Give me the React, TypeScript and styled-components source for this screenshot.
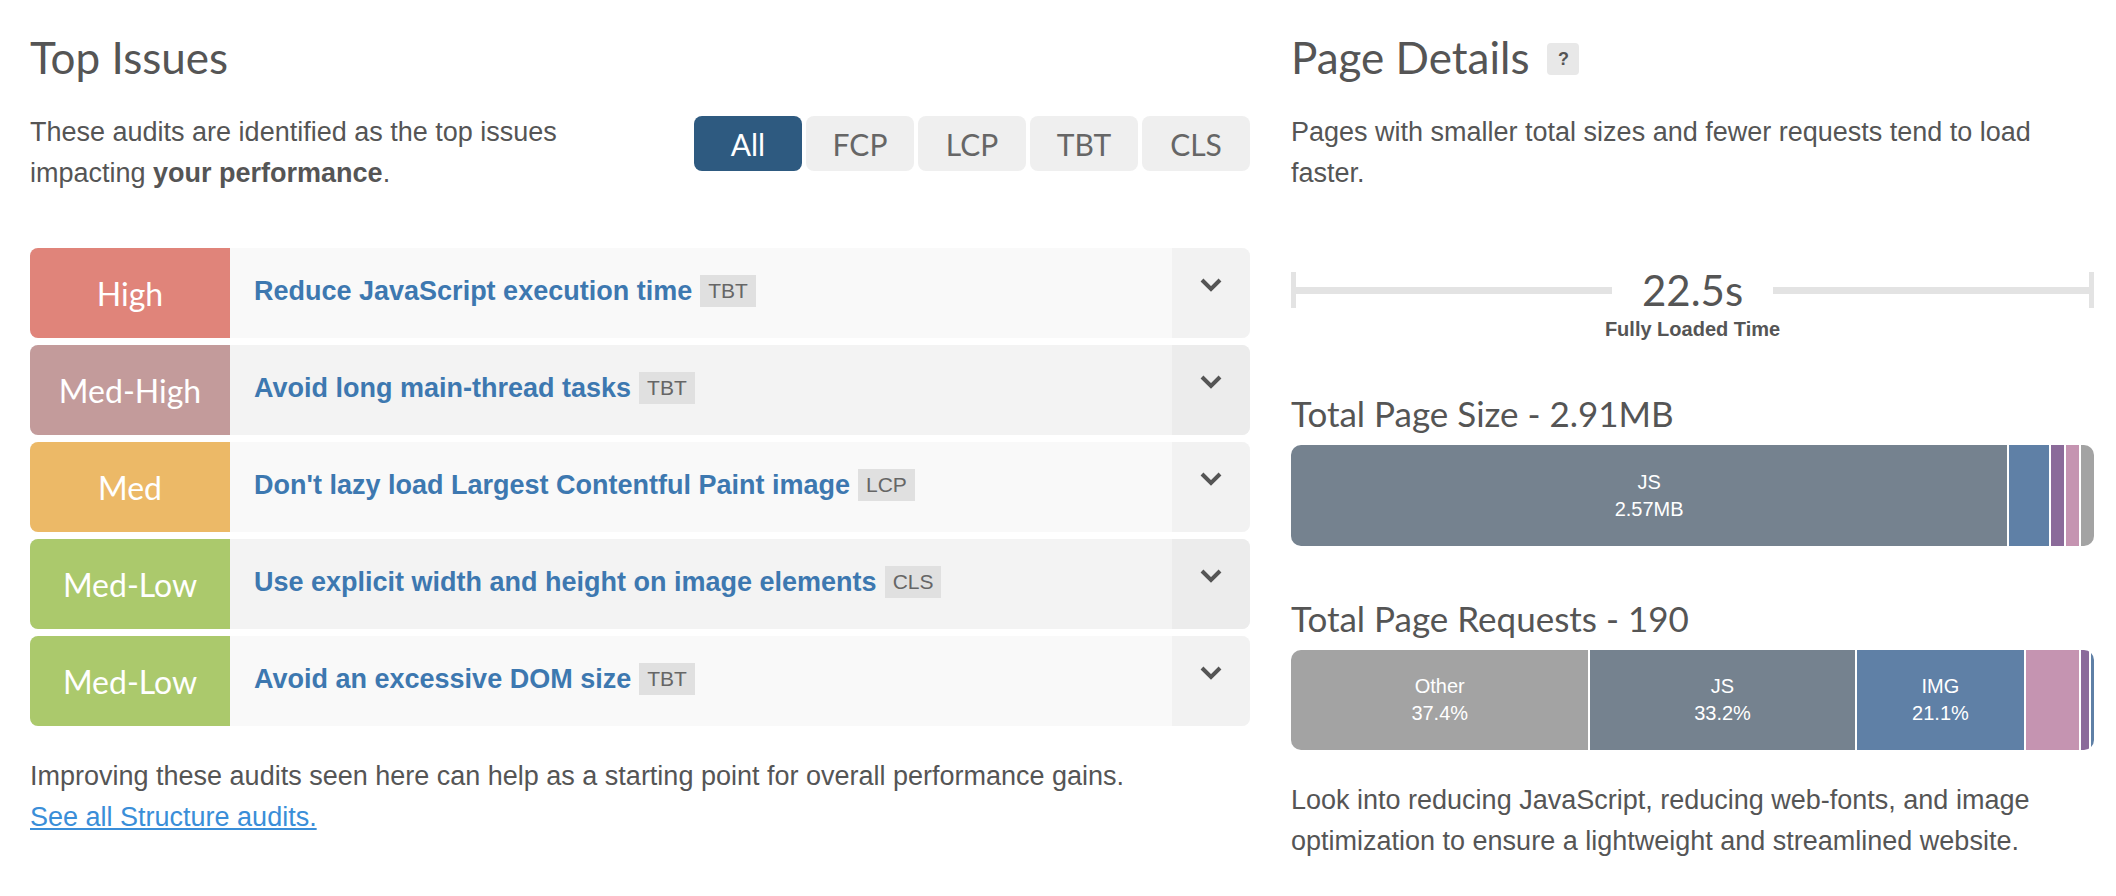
import styled, { createGlobalStyle } from 'styled-components'

const GlobalStyle = createGlobalStyle`
  body {
    margin: 0;
    background: #fff;
    font-family: "Liberation Sans", Arial, sans-serif;
    color: #555;
  }
`

const levelColors: Record<string, string> = {
  High: '#e0847a',
  'Med-High': '#c39b9b',
  Med: '#ecb967',
  'Med-Low': '#abc96c',
}

const issues = [
  { level: 'High', title: 'Reduce JavaScript execution time', tag: 'TBT' },
  { level: 'Med-High', title: 'Avoid long main-thread tasks', tag: 'TBT' },
  { level: 'Med', title: "Don't lazy load Largest Contentful Paint image", tag: 'LCP' },
  { level: 'Med-Low', title: 'Use explicit width and height on image elements', tag: 'CLS' },
  { level: 'Med-Low', title: 'Avoid an excessive DOM size', tag: 'TBT' },
]

const filters = ['All', 'FCP', 'LCP', 'TBT', 'CLS']

const sizeSegments = [
  { pct: 89.2, color: '#75828f', label: 'JS', value: '2.57MB' },
  { pct: 5.0, color: '#5f80a6' },
  { pct: 1.6, color: '#8b6b9a' },
  { pct: 1.6, color: '#c594b1' },
  { pct: 1.6, color: '#a3a3a3' },
]

const requestSegments = [
  { pct: 37.4, color: '#a3a3a3', label: 'Other', value: '37.4%' },
  { pct: 33.2, color: '#75828f', label: 'JS', value: '33.2%' },
  { pct: 21.1, color: '#5f80a6', label: 'IMG', value: '21.1%' },
  { pct: 6.6, color: '#c594b1' },
  { pct: 1.0, color: '#8b6b9a' },
  { pct: 0.4, color: '#5f80a6' },
]

const Page = styled.div`
  display: grid;
  grid-template-columns: 1220px 803px;
  column-gap: 41px;
  padding: 28px 0 0 30px;
`

const Column = styled.div`
  display: flex;
  flex-direction: column;
`

const Heading = styled.h2`
  margin: 0;
  font-family: Lato, "Open Sans", sans-serif;
  font-weight: 400;
  font-size: 44px;
  line-height: 58px;
  color: #555;
  display: flex;
  align-items: center;
  gap: 18px;
`

const HelpBox = styled.span`
  width: 32px;
  height: 32px;
  border-radius: 4px;
  background: #e8e8e8;
  font-family: "Liberation Sans", Arial, sans-serif;
  font-weight: 700;
  font-size: 18px;
  display: flex;
  align-items: center;
  justify-content: center;
  margin-top: 4px;
`

const Intro = styled.div`
  display: flex;
  justify-content: space-between;
  align-items: flex-start;
  margin-top: 26px;
`

const Text = styled.p`
  margin: 0;
  font-size: 27px;
  line-height: 41px;
  color: #555;
`

const Filters = styled.div`
  display: flex;
  gap: 4px;
  margin-top: 4px;
`

const FilterButton = styled.button<{ $active?: boolean }>`
  width: 108px;
  height: 55px;
  border: none;
  border-radius: 8px;
  font-family: Lato, "Open Sans", sans-serif;
  font-size: 30px;
  color: ${({ $active }) => ($active ? '#fff' : '#666')};
  background: ${({ $active }) => ($active ? '#2e5a80' : '#efefef')};
`

const IssueList = styled.div`
  display: flex;
  flex-direction: column;
  gap: 7px;
  margin-top: 54px;
`

const IssueRow = styled.div<{ $alt: boolean }>`
  display: flex;
  height: 90px;
  border-radius: 8px;
  overflow: hidden;
  background: ${({ $alt }) => ($alt ? '#f3f3f3' : '#f9f9f9')};
`

const Level = styled.div<{ $color: string }>`
  width: 200px;
  flex-shrink: 0;
  background: ${({ $color }) => $color};
  color: #fff;
  font-family: Lato, "Open Sans", sans-serif;
  font-size: 32px;
  display: flex;
  align-items: center;
  justify-content: center;
`

const IssueTitle = styled.div`
  flex: 1;
  display: flex;
  align-items: center;
  gap: 8px;
  padding-left: 24px;
  padding-bottom: 4px;
  font-size: 27px;
  font-weight: 700;
  color: #3d78b0;
`

const Tag = styled.span`
  background: #e0e0e0;
  color: #666;
  font-weight: 400;
  font-size: 21px;
  padding: 4px 8px;
`

const Chevron = styled.div<{ $alt: boolean }>`
  width: 78px;
  display: flex;
  justify-content: center;
  padding-top: 30px;
  box-sizing: border-box;
  background: ${({ $alt }) => ($alt ? '#ececec' : '#f2f2f2')};
`

const Footer = styled.div`
  margin-top: 30px;
`

const Link = styled.a`
  font-size: 27px;
  line-height: 41px;
  color: #3a8ed8;
  text-decoration: underline;
`

const Timeline = styled.div`
  margin-top: 78px;
  display: flex;
  align-items: center;
  height: 36px;
`

const Cap = styled.div`
  width: 5px;
  height: 36px;
  background: #e3e3e3;
`

const Line = styled.div`
  flex: 1;
  height: 7px;
  background: #e3e3e3;
`

const Time = styled.div`
  font-family: Lato, "Open Sans", sans-serif;
  font-size: 42px;
  color: #555;
  padding: 0 30px;
  line-height: 36px;
`

const TimeLabel = styled.div`
  text-align: center;
  font-size: 20px;
  font-weight: 700;
  margin-top: 10px;
  color: #555;
`

const SubHeading = styled.h3`
  margin: 0;
  font-family: Lato, "Open Sans", sans-serif;
  font-weight: 400;
  font-size: 35px;
  line-height: 44px;
  color: #555;
`

const Bar = styled.div<{ $height: number }>`
  display: flex;
  gap: 2px;
  height: ${({ $height }) => $height}px;
  border-radius: 10px;
  overflow: hidden;
  margin-top: 10px;
`

const Segment = styled.div<{ $color: string }>`
  background: ${({ $color }) => $color};
  color: #fff;
  font-size: 20px;
  line-height: 27px;
  display: flex;
  flex-direction: column;
  align-items: center;
  justify-content: center;
  min-width: 2px;
`

const Chev = () => (
  <svg width="22" height="14" viewBox="0 0 22 14">
    <path d="M2 2 L11 11 L20 2" fill="none" stroke="#555" strokeWidth="4" />
  </svg>
)

type Seg = { pct: number; color: string; label?: string; value?: string }

const StackedBar = ({ segments, height }: { segments: Seg[]; height: number }) => (
  <Bar $height={height}>
    {segments.map((s, i) => (
      <Segment key={i} $color={s.color} style={{ flex: `${s.pct} 0 0` }}>
        {s.label && <span>{s.label}</span>}
        {s.value && <span>{s.value}</span>}
      </Segment>
    ))}
  </Bar>
)

export default function App() {
  return (
    <>
      <GlobalStyle />
      <Page>
        <Column>
          <Heading>Top Issues</Heading>
          <Intro>
            <Text>
              These audits are identified as the top issues
              <br />
              impacting <b>your performance</b>.
            </Text>
            <Filters>
              {filters.map((f) => (
                <FilterButton key={f} $active={f === 'All'}>
                  {f}
                </FilterButton>
              ))}
            </Filters>
          </Intro>
          <IssueList>
            {issues.map((issue, i) => (
              <IssueRow key={i} $alt={i % 2 === 1}>
                <Level $color={levelColors[issue.level]}>{issue.level}</Level>
                <IssueTitle>
                  {issue.title}
                  <Tag>{issue.tag}</Tag>
                </IssueTitle>
                <Chevron $alt={i % 2 === 1}>
                  <Chev />
                </Chevron>
              </IssueRow>
            ))}
          </IssueList>
          <Footer>
            <Text>Improving these audits seen here can help as a starting point for overall performance gains.</Text>
            <Link href="#">See all Structure audits.</Link>
          </Footer>
        </Column>

        <Column>
          <Heading>
            Page Details <HelpBox>?</HelpBox>
          </Heading>
          <Text style={{ marginTop: 26 }}>
            Pages with smaller total sizes and fewer requests tend to load faster.
          </Text>
          <Timeline>
            <Cap />
            <Line />
            <Time>22.5s</Time>
            <Line />
            <Cap />
          </Timeline>
          <TimeLabel>Fully Loaded Time</TimeLabel>
          <SubHeading style={{ marginTop: 50 }}>Total Page Size - 2.91MB</SubHeading>
          <StackedBar segments={sizeSegments} height={101} />
          <SubHeading style={{ marginTop: 50 }}>Total Page Requests - 190</SubHeading>
          <StackedBar segments={requestSegments} height={100} />
          <Text style={{ marginTop: 30 }}>
            Look into reducing JavaScript, reducing web-fonts, and image optimization to ensure a lightweight and
            streamlined website.
          </Text>
        </Column>
      </Page>
    </>
  )
}
